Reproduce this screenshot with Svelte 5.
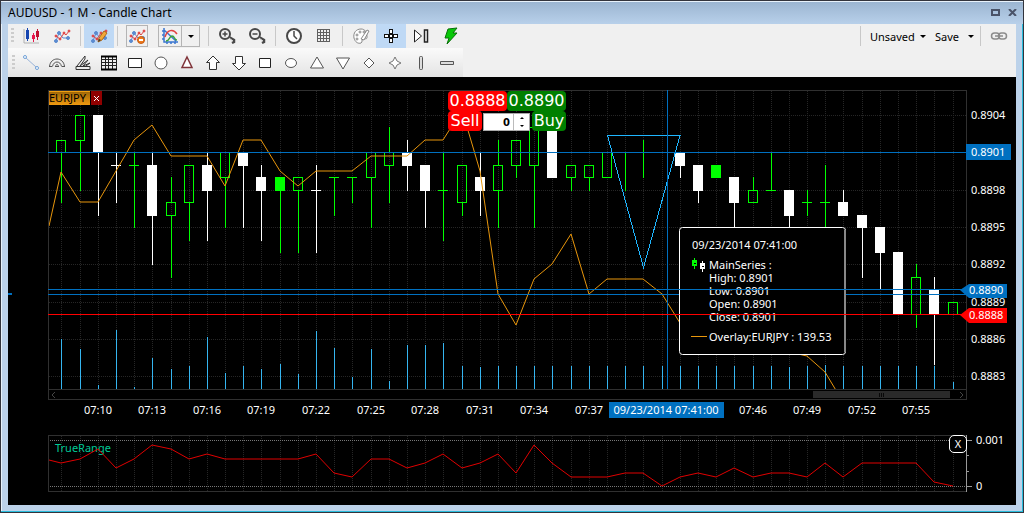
<script lang="ts">
  type Candle = [kind: string, high: number, low: number, top: number, bottom: number];

  // kind: g = hollow green, G = filled green, w = white. Prices are in 1/10000
  const candles: Candle[] = [
    ['g', 8902, 8897, 8902, 8901], ['g', 8904, 8898, 8904, 8902], ['w', 8904, 8896, 8904, 8901],
    ['w', 8901, 8897, 8900, 8900], ['g', 8901, 8895, 8900, 8900], ['w', 8901, 8892, 8900, 8896],
    ['g', 8899, 8891, 8897, 8896], ['g', 8900, 8894, 8900, 8897], ['w', 8901, 8894, 8900, 8898],
    ['g', 8901, 8895, 8901, 8899], ['w', 8901, 8895, 8901, 8900], ['w', 8900, 8894, 8899, 8898],
    ['G', 8899, 8893, 8899, 8898], ['g', 8899, 8893, 8899, 8898], ['w', 8900, 8893, 8898, 8898],
    ['g', 8899, 8896, 8899, 8899], ['g', 8899, 8897, 8899, 8899], ['g', 8901, 8895, 8901, 8899],
    ['g', 8903, 8897, 8901, 8900], ['w', 8902, 8898, 8901, 8900], ['w', 8900, 8895, 8900, 8898],
    ['g', 8901, 8894, 8898, 8898], ['g', 8900, 8896, 8900, 8897], ['w', 8901, 8896, 8899, 8898],
    ['g', 8902, 8895, 8900, 8898], ['g', 8902, 8899, 8902, 8900], ['g', 8903, 8895, 8903, 8900],
    ['w', 8903, 8899, 8903, 8899], ['g', 8900, 8898, 8900, 8899], ['g', 8900, 8898, 8900, 8899],
    ['g', 8901, 8899, 8901, 8899], ['g', 8901, 8898, 8901, 8901], ['g', 8902, 8899, 8901, 8901],
    ['g', 8901, 8901, 8901, 8901], ['w', 8901, 8899, 8901, 8900], ['w', 8900, 8897, 8900, 8898],
    ['G', 8900, 8899, 8900, 8899], ['w', 8899, 8894, 8899, 8897], ['g', 8899, 8897, 8898, 8897],
    ['g', 8901, 8898, 8898, 8898], ['w', 8898, 8894, 8898, 8896], ['g', 8898, 8896, 8897, 8897],
    ['g', 8900, 8895, 8897, 8897], ['w', 8898, 8896, 8897, 8896], ['w', 8896, 8891, 8896, 8895],
    ['w', 8895, 8890, 8895, 8893], ['w', 8893, 8888, 8893, 8888], ['g', 8892, 8887, 8891, 8888],
    ['w', 8891, 8884, 8890, 8888], ['g', 8889, 8888, 8889, 8888]
  ];

  const overlay = [
    172, 202, 202, 171, 140, 125, 156, 156, 156, 186, 140, 140, 171, 186, 171, 171, 171, 156, 156, 156,
    140, 140, 110, 171, 294, 325, 279, 264, 234, 294, 279, 279, 279, 294, 323, 330, 335, 340, 344, 348,
    352, 356, 372, 402
  ];

  const volume = [
    50, 40, 4, 59, 2, 31, 20, 23, 52, 16, 23, 20, 25, 15, 58, 41, 12, 40, 8, 44, 44, 46, 23, 22, 23, 23,
    23, 23, 23, 23, 23, 23, 23, 23, 23, 23, 23, 23, 23, 23, 22, 23, 24, 23, 23, 23, 23, 23, 23, 7
  ];

  const range = [
    463, 459, 449, 468, 459, 445, 449, 459, 454, 459, 459, 459, 459, 459, 454, 473, 477, 459, 459, 468,
    463, 454, 468, 463, 454, 473, 445, 463, 477, 477, 477, 473, 473, 486, 477, 473, 477, 468, 477, 473,
    473, 477, 463, 477, 463, 463, 463, 463, 482, 486
  ];

  const colors: Record<string, string> = { g: '#00ff00', G: '#00ff00', w: '#ffffff' };
  const priceTicks = [8904, 8898, 8895, 8892, 8889, 8886, 8883];
  const gridPrices = [8904, 8901, ...priceTicks.slice(1)];
  const timeTicks = [2, 5, 8, 11, 14, 17, 20, 23, 26, 29, 38, 41, 44, 47];

  const xAt = (i: number) => Math.round(61.4 + 18.1875 * i);
  const yAt = (p: number) => Math.round(115 + (8904 - p) * 12.45);
  const price = (p: number) => `0.${p}`;
  const time = (i: number) => `07:${String(i + 8).padStart(2, '0')}`;
  const line = (ys: number[], first: number) =>
    `49,${first} ` + ys.map((y, i) => `${xAt(i)},${y}`).join(' ');

  let amount = $state(0);

  const shapes = [
    'Line', 'Arcs', 'Fan', 'Table', 'Rectangle', 'Circle', 'Red triangle', 'Arrow up', 'Arrow down',
    'Square', 'Ellipse', 'Triangle', 'Triangle down', 'Diamond', 'Star', 'Vertical bar', 'Horizontal bar'
  ];
</script>

{#snippet scatter()}
  <g stroke="#5b8bd0" fill="#5b8bd0">
    <path d="M3 14 6 6 10 11 15 11" fill="none" />
    <circle cx="3" cy="14" r="1.500" /><circle cx="6" cy="6" r="1.500" /><circle cx="15" cy="11" r="1.500" />
  </g>
  <g stroke="#e04545" fill="#e04545">
    <path d="M3 9 7 12 11 6 13 8 16 4" fill="none" />
    <circle cx="3" cy="9" r="1" /><circle cx="7" cy="12" r="1" /><circle cx="11" cy="6" r="1" /><circle cx="16" cy="4" r="1" />
  </g>
{/snippet}

{#snippet magnifier(plus: boolean)}
  <svg viewBox="0 0 18 18" class="icon" fill="none" stroke="#484848">
    <circle cx="7" cy="7" r="5" stroke-width="2" />
    <path d="M4.500 7h5" stroke-width="1.500" />
    {#if plus}<path d="M7 4.500v5" stroke-width="1.500" />{/if}
    <path d="m11 10 5 3v2l-2 1" stroke-width="2.500" />
    <path d="m11 11 4 3" stroke="#ddd" />
  </svg>
{/snippet}

<main class="window">
  <header class="titlebar">
    <h1>AUDUSD - 1 M - Candle Chart</h1>
    <div class="window-buttons">
      <button aria-label="Maximize"><svg viewBox="0 0 9 7" width="9" height="7"><path d="M1 1h7v5H1z" fill="none" stroke="#4a5368" stroke-width="2" /></svg></button>
      <button aria-label="Close"><svg viewBox="0 0 9 7" width="9" height="7"><path d="m1 0 7 7M8 0 1 7" stroke="#4a5368" stroke-width="2" /></svg></button>
    </div>
  </header>

  <div class="toolbar">
    <i class="grip"></i>
    <button class="tool" aria-label="Candles">
      <svg viewBox="0 0 18 18" class="icon">
        <path d="M3 3h3v9H3zM4 1h1v13H4z" fill="#1645b0" />
        <path d="M1 2v14h15" fill="none" stroke="#b0b0b0" />
        <path d="M9 8h3v4H9zM10 6h1v9h-1z" fill="#e8174b" />
        <path d="M13 4h3v6h-3zM14 2h1v11h-1z" fill="#c01030" />
      </svg>
    </button>
    <button class="tool" aria-label="Indicators"><svg viewBox="0 0 18 18" class="icon">{@render scatter()}</svg></button>
    <i class="sep"></i>
    <button class="tool active" aria-label="Draw">
      <svg viewBox="0 0 18 18" class="icon">
        {@render scatter()}
        <path d="m8 15 1-4 5-7 3 2-5 7z" fill="#f2a83a" stroke="#b06a1a" />
        <path d="m8 15 1-3 2 1z" fill="#333" />
      </svg>
    </button>
    <i class="sep"></i>
    <button class="tool boxed" aria-label="Remove drawing">
      <svg viewBox="0 0 18 18" class="icon">
        {@render scatter()}
        <circle cx="13" cy="13" r="3.500" fill="#ee7a1c" stroke="#c85b10" />
        <path d="M11 13h4" stroke="#fff" stroke-width="2" />
      </svg>
    </button>
    <div class="split">
      <button aria-label="Chart type">
        <svg viewBox="0 0 18 18" class="icon" fill="none" stroke-width="1.500">
          <path d="M3 1v14h14M3 3l12 11" stroke="#3a76d0" />
          <path d="M4 10c2-7 8-9 12-3" stroke="#e04040" />
          <path d="M5 14c4 0 3-5 6-5s2 4 5 4" stroke="#38a038" />
          <path d="M1 4h2M1 8h2M1 12h2M6 15v2M10 15v2M14 15v2" stroke="#3a76d0" />
        </svg>
      </button>
      <button class="drop" aria-label="Chart type menu"><i class="arrow"></i></button>
    </div>
    <i class="sep"></i>
    <button class="tool" aria-label="Zoom in">{@render magnifier(true)}</button>
    <button class="tool" aria-label="Zoom out">{@render magnifier(false)}</button>
    <i class="sep"></i>
    <button class="tool" aria-label="Period">
      <svg viewBox="0 0 18 18" class="icon" fill="none" stroke="#484848" stroke-width="2">
        <circle cx="9" cy="9" r="7" fill="#fff" /><path d="M9 4v5l3 3" stroke-width="1.500" />
      </svg>
    </button>
    <button class="tool" aria-label="Grid">
      <svg viewBox="0 0 18 18" class="icon" shape-rendering="crispEdges">
        <path d="M2.500 2.500h12v12h-12zM5.500 2v13M8.500 2v13M11.500 2v13M2 5.500h13M2 8.500h13M2 11.500h13" fill="none" stroke="#606060" />
      </svg>
    </button>
    <i class="sep"></i>
    <button class="tool" aria-label="Colors">
      <svg viewBox="0 0 18 18" class="icon" fill="#fff" stroke="#888">
        <path d="M9 2C4 2 1 6 2 11c1 4 4 6 7 5 2-1 0-3 2-4s4 1 4-2c0-5-2-8-6-8z" />
        <path d="m9 12 6-9 2 1-5 9z" />
        <circle cx="5" cy="8" r="1" /><circle cx="8" cy="5" r="1" /><circle cx="5" cy="12" r="1" /><circle cx="12" cy="5" r="1" />
      </svg>
    </button>
    <button class="tool active" aria-label="Crosshair">
      <svg viewBox="0 0 18 18" class="icon" fill="#fff" stroke="#111" shape-rendering="crispEdges">
        <path d="M7.500 2.500h3v4h-3zM7.500 11.500h3v4h-3zM2.500 7.500h4v3h-4zM11.500 7.500h4v3h-4zM7.500 7.500h3v3h-3z" />
      </svg>
    </button>
    <button class="tool" aria-label="Go to end">
      <svg viewBox="0 0 18 18" class="icon" fill="#fff" stroke="#222">
        <path d="M2.500 3v12l7-6z" /><path d="M12.500 3h3v12h-3z" stroke-width="1.500" />
      </svg>
    </button>
    <button class="tool" aria-label="Quick trade">
      <svg viewBox="0 0 18 18" class="icon"><path d="m6 2 9-1-4 5h4L5 17l2-6H3z" fill="#08c808" stroke="#087008" /></svg>
    </button>
    <div class="layout-tools">
      <i class="sep"></i>
      <button class="menu">Unsaved<i class="arrow small"></i></button>
      <button class="menu save">Save<i class="arrow small"></i></button>
      <i class="sep"></i>
      <button class="tool" aria-label="Link">
        <svg viewBox="0 0 18 18" class="icon" fill="none" stroke="#8c8c8c" stroke-width="1.500">
          <rect x="1.500" y="6" width="8" height="6" rx="3" /><rect x="8.500" y="6" width="8" height="6" rx="3" /><path d="M5 9h8" />
        </svg>
      </button>
    </div>
  </div>

  <div class="shapes-row">
    <div class="toolbar shapes">
      <i class="grip"></i>
      {#each shapes as name, i}
        <button class="shape" aria-label={name}>
          <svg viewBox="0 0 18 18" class="icon" fill="none" stroke="#555">
            {#if i === 0}
              <path d="m4 4 10 9" stroke="#9ab4d8" /><circle cx="3" cy="3" r="1.500" fill="#fff" stroke="#6fa0d8" /><circle cx="15" cy="14" r="1.500" fill="#fff" stroke="#6fa0d8" />
            {:else if i === 1}
              <path d="M1.500 12.500c1-10 14-10 15 0M4.500 12.500c1-6 8-6 9 0M7.500 12.500c1-3 2-3 3 0M1 12.500h3M7 12.500h4M14 12.500h3" />
            {:else if i === 2}
              <path d="M2 12.500h14v3H2zM3 12l4-5 4-5v3l-5 7 8-6-5 6 7-3-4 3" stroke="#333" />
            {:else if i === 3}
              <path d="M1.500 2.500h15v13h-15zM5.500 2v13M8.500 2v13M12.500 2v13M1 5.500h15M1 8.500h15M1 11.500h15" stroke="#222" shape-rendering="crispEdges" /><path d="M1 2.500h16M1 15.500h16" stroke="#000" stroke-width="2" />
            {:else if i === 4}
              <path d="M2.500 4.500h13v9h-13z" fill="#fff" stroke="#222" />
            {:else if i === 5}
              <circle cx="9" cy="9" r="6" fill="#fff" />
            {:else if i === 6}
              <path d="m9 3 5 10.500H4z" fill="#fff" stroke="#80343a" stroke-width="1.500" />
            {:else if i === 7}
              <path d="m9 2 6.500 6.500h-3v7h-7v-7h-3z" fill="#fff" stroke="#333" />
            {:else if i === 8}
              <path d="m9 16 6.500-6.500h-3v-7h-7v7h-3z" fill="#fff" stroke="#333" />
            {:else if i === 9}
              <path d="M3.500 4.500h11v9h-11z" fill="#fff" stroke="#222" />
            {:else if i === 10}
              <ellipse cx="9" cy="9" rx="5.500" ry="4.500" fill="#fff" />
            {:else if i === 11}
              <path d="m9 3 6.500 11h-13z" fill="#fff" />
            {:else if i === 12}
              <path d="m9 15 6.500-11h-13z" fill="#fff" />
            {:else if i === 13}
              <path d="m9 4 5 5-5 5-5-5z" fill="#fff" />
            {:else if i === 14}
              <path d="m9 3 2 4 4 2-4 2-2 4-2-4-4-2 4-2z" fill="#fff" stroke="#777" />
            {:else if i === 15}
              <rect x="7.500" y="2.500" width="3" height="13" rx="1" fill="#ddd" />
            {:else}
              <path d="M2.500 7.500h13v3h-13z" fill="#ddd" />
            {/if}
          </svg>
        </button>
      {/each}
    </div>
  </div>

  <svg class="chart" viewBox="8 77 1008 428" role="group" aria-label="AUDUSD candle chart">
    <defs>
      <clipPath id="plot"><rect x="49" y="91" width="917" height="298" /></clipPath>
    </defs>

    <g class="crisp grid">
      {#each candles as _, i}
        <path d="M{xAt(i) + 0.5} 91V389M{xAt(i) + 0.5} 436V491" />
      {/each}
      {#each gridPrices as p}
        <path d="M49 {yAt(p) + 0.5}H966" />
      {/each}
    </g>
    <path class="crisp" d="M48.500 90.500h918v309h-918zM48 389.500h918M48.500 435.500h918v56h-918z" fill="none" stroke="#303030" />

    <g class="crisp">
      {#each volume as v, i}
        <rect x={xAt(i)} y={389 - v} width="1" height={v} fill="#35b5f0" />
      {/each}
      {#each candles as [kind, high, low, top, bottom], i}
        {@const x = xAt(i)}
        {@const c = colors[kind]}
        {#if kind === 'g' && top !== bottom}
          <rect {x} y={yAt(high)} width="1" height={yAt(top) - yAt(high)} fill={c} />
          <rect {x} y={yAt(bottom)} width="1" height={yAt(low) - yAt(bottom) + 1} fill={c} />
          <rect x={x - 4.5} y={yAt(top) + 0.5} width="9" height={yAt(bottom) - yAt(top)} fill="none" stroke={c} />
        {:else}
          <rect {x} y={yAt(high)} width="1" height={yAt(low) - yAt(high) + 1} fill={c} />
          <rect x={x - 5} y={yAt(top)} width="10" height={yAt(bottom) - yAt(top) + 1} fill={c} />
        {/if}
      {/each}
    </g>

    <g clip-path="url(#plot)">
      <polyline points={line(overlay, 226)} fill="none" stroke="#e8960c" />
    </g>
    <path class="crisp" d="M607 135.500h73L643.500 267.500 607.500 135.500" fill="none" stroke="#1fb6ff" />

    <g class="crisp" fill="#0070c0">
      <rect x="48" y="152" width="918" height="1" />
      <rect x="48" y="294" width="918" height="1" />
      <rect x="8" y="293" width="4" height="2" />
      <rect x="667" y="90" width="1" height="299" />
    </g>

    <rect x="679.500" y="227.500" width="166" height="127" rx="3" fill="#000" stroke="#fff" />
    <path d="M845 230v122" stroke="#888" stroke-width="2" />
    <g class="label">
      <text x="692" y="249">09/23/2014 07:41:00</text>
      <text x="709" y="269">MainSeries :</text>
      <text x="709" y="282">High: 0.8901</text>
      <text x="709" y="295">Low: 0.8901</text>
      <text x="709" y="308">Open: 0.8901</text>
      <text x="709" y="321">Close: 0.8901</text>
      <text x="709" y="341">Overlay:EURJPY : 139.53</text>
    </g>
    <g class="crisp">
      <path d="M694 258h1v11h-1zM692 260h5v6h-5z" fill="#00ff00" />
      <path d="M702 261h1v11h-1zM700 263h5v6h-5z" fill="#fff" />
      <path d="M694 263h2v1h-2zM702 266h2v1h-2z" fill="#000" />
      <rect x="691" y="336" width="16" height="1" fill="#e8960c" />
      <rect x="48" y="289" width="914" height="1" fill="#0070c0" />
      <rect x="48" y="314" width="914" height="1" fill="#ff0000" />
    </g>

    <g class="label">
      {#each priceTicks as p}
        <text x="971" y={yAt(p) + 4}>{price(p)}</text>
      {/each}
      <rect x="966" y="144" width="45" height="16" fill="#0070c0" />
      <text x="971" y="156">0.8901</text>
      <path d="m960 290 9-6h38v14h-38z" fill="#0070c0" />
      <text x="969" y="294">0.8890</text>
      <path d="m960 315 9-7h38v15h-38z" fill="#ff0000" />
      <text x="969" y="319">0.8888</text>
      <g text-anchor="middle">
        {#each timeTicks as i}
          <text x={xAt(i)} y="414">{time(i)}</text>
        {/each}
        <rect x="609" y="402" width="115" height="16" fill="#0070c0" />
        <text x="666" y="414">09/23/2014 07:41:00</text>
      </g>
    </g>

    <rect x="813" y="391" width="137" height="7" fill="#2a2a2a" />
    <path d="M879.500 393v4M881.500 393v4M883.500 393v4" stroke="#080808" />
    <path d="m55 392-3 3 3 3M960 392l3 3-3 3" fill="none" stroke="#444" />

    <text class="label teal" x="55" y="452">TrueRange</text>
    <path class="crisp" d="M50 440.500H966M50 486.500H966" stroke="#777" stroke-dasharray="1 1" />
    <polyline points={line(range, 460)} fill="none" stroke="#e00000" />
    <path class="crisp" d="M966.500 435v57M966 440.500h6M966 455.500h3M966 471.500h3M966 486.500h6" stroke="#999" fill="none" />
    <text class="label" x="976" y="444">0.001</text>
    <text class="label" x="976" y="490">0</text>

    <foreignObject x="49" y="91" width="54" height="15">
      <div class="tag">
        <span>EURJPY</span>
        <button aria-label="Remove EURJPY"><svg viewBox="0 0 5 5" width="5" height="5"><path d="m0 0 5 5M5 0 0 5" stroke="#fff" /></svg></button>
      </div>
    </foreignObject>

    <foreignObject x="448" y="91" width="119" height="41">
      <div class="trade">
        <button class="sell"><span>0.8888</span><b>Sell</b></button>
        <button class="buy"><span>0.8890</span><b>Buy</b></button>
        <div class="amount">
          <input aria-label="Amount" type="text" bind:value={amount} />
          <div class="spin">
            <button aria-label="Increase" onclick={() => amount++}><i class="up"></i></button>
            <button aria-label="Decrease" onclick={() => amount--}><i class="down"></i></button>
          </div>
        </div>
      </div>
    </foreignObject>

    <foreignObject x="949" y="435" width="18" height="18">
      <button class="close-range">X</button>
    </foreignObject>
  </svg>
</main>

<style>
  :global(body) {
    margin: 0;
    background: #bcd2ea;
  }
  .window {
    box-sizing: border-box;
    border: 1px solid #33343c;
    box-shadow: inset -1px -1px 0 #28bcdc, inset 1px 1px 0 #e8f2fb;
    padding: 0 7px 7px;
    background: #bcd2ea;
    font-family: "Noto Sans", "Open Sans", sans-serif;
    font-size: 12px;
    color: #000;
  }
  button {
    margin: 0;
    padding: 0;
    border: 0;
    background: none;
    font: inherit;
    color: inherit;
  }
  .titlebar {
    display: flex;
    align-items: center;
    justify-content: space-between;
    height: 23px;
    margin: 0 -7px;
    padding: 0 6px 0 7px;
    background: linear-gradient(#9ab4d0, #b8d0ea);
    box-shadow: inset 0 1px 0 #e8f2fb;
  }
  h1 {
    margin: 0;
    font-size: 12px;
    font-weight: 400;
    line-height: 23px;
  }
  .window-buttons {
    display: flex;
    gap: 8px;
  }
  .window-buttons button {
    display: flex;
  }
  .toolbar {
    display: flex;
    align-items: center;
    height: 24px;
    background: #f0f0f0;
  }
  .grip {
    width: 3px;
    height: 16px;
    margin: 0 3px;
    background: repeating-linear-gradient(#ccc 0 2px, transparent 2px 4px);
  }
  .sep {
    width: 1px;
    height: 20px;
    margin: 0 3px;
    background: #c8c8c8;
  }
  .icon {
    display: block;
    flex: none;
    width: 18px;
    height: 18px;
  }
  .tool {
    display: flex;
    align-items: center;
    justify-content: center;
    width: 30px;
    height: 24px;
  }
  .active {
    background: #bfd9f5;
  }
  .boxed {
    box-sizing: border-box;
    width: 22px;
    height: 22px;
    margin: 0 5px;
    border: 1px solid #b4b4b4;
  }
  .split {
    display: flex;
    box-sizing: border-box;
    width: 42px;
    height: 22px;
    margin: 0 5px;
    border: 1px solid #b4b4b4;
  }
  .split button {
    display: flex;
    align-items: center;
    justify-content: center;
    width: 22px;
  }
  .split .drop {
    width: 18px;
    border-left: 1px solid #b4b4b4;
  }
  .arrow {
    border: 3px solid transparent;
    border-top-color: #000;
    border-bottom: 0;
  }
  .arrow.small {
    border-width: 3px 3px 0;
  }
  .layout-tools {
    display: flex;
    align-items: center;
    margin-left: auto;
    padding-right: 2px;
  }
  .menu {
    display: flex;
    align-items: center;
    justify-content: space-between;
    width: 56px;
    margin: 0 3px 0 6px;
    font-size: 11px;
  }
  .save {
    width: 39px;
  }
  .shapes-row {
    background: #f0f0f0;
  }
  .shapes {
    box-sizing: border-box;
    width: 455px;
    height: 29px;
    padding-left: 1px;
    background: linear-gradient(#fafafa, #e4e4e4);
  }
  .shape {
    display: flex;
    justify-content: center;
    width: 26px;
  }
  .chart {
    display: block;
    width: 100%;
    height: auto;
    background: #000;
  }
  .crisp {
    shape-rendering: crispEdges;
  }
  .grid {
    fill: none;
    stroke: #262626;
    stroke-dasharray: 1 1;
  }
  .label {
    font-size: 11px;
  }
  text {
    fill: #fff;
  }
  .teal {
    fill: #00c896;
  }
  .tag {
    display: flex;
    gap: 1px;
    height: 14px;
    font-size: 11px;
    line-height: 14px;
    color: #000;
  }
  .tag span {
    box-sizing: border-box;
    width: 41px;
    border-top: 1px solid #f0a010;
    background: linear-gradient(#a06808, #f09a10);
    line-height: 12px;
  }
  .tag button {
    display: flex;
    align-items: center;
    justify-content: center;
    width: 11px;
    background: #900000;
  }
  .trade {
    position: relative;
    display: flex;
    width: 118px;
    font-family: "DejaVu Sans", sans-serif;
    font-size: 16px;
    color: #fff;
  }
  .trade > button {
    display: flex;
    flex-direction: column;
    width: 59px;
  }
  .trade span,
  .trade b {
    box-sizing: border-box;
    height: 20px;
    padding: 0 1px;
    border-radius: 4px;
    line-height: 20px;
    font-weight: 400;
  }
  .trade span {
    width: 59px;
  }
  .trade b {
    width: 34px;
  }
  .sell span,
  .sell b {
    background: #ff0000;
  }
  .buy span,
  .buy b {
    background: #008000;
  }
  .trade .buy {
    align-items: flex-end;
  }
  .amount {
    position: absolute;
    top: 22px;
    left: 35px;
    display: flex;
    box-sizing: border-box;
    width: 47px;
    height: 18px;
    border: 1px solid #aaa;
    background: #fff;
  }
  .amount input {
    box-sizing: border-box;
    width: 30px;
    padding: 0 3px;
    border: 0;
    border-right: 1px solid #bbb;
    background: #fff;
    font: bold 10px "DejaVu Sans", sans-serif;
    text-align: right;
  }
  .spin {
    display: flex;
    flex: 1;
    flex-direction: column;
  }
  .spin button {
    display: flex;
    flex: 1;
    align-items: center;
    justify-content: center;
  }
  .up,
  .down {
    border: 2px solid transparent;
  }
  .up {
    border-top: 0;
    border-bottom-color: #000;
  }
  .down {
    border-bottom: 0;
    border-top-color: #000;
  }
  .close-range {
    display: block;
    box-sizing: border-box;
    width: 18px;
    height: 18px;
    border: 1px solid #fff;
    border-radius: 5px;
    background: #000;
    font-size: 11px;
    line-height: 14px;
    color: #fff;
  }
</style>
